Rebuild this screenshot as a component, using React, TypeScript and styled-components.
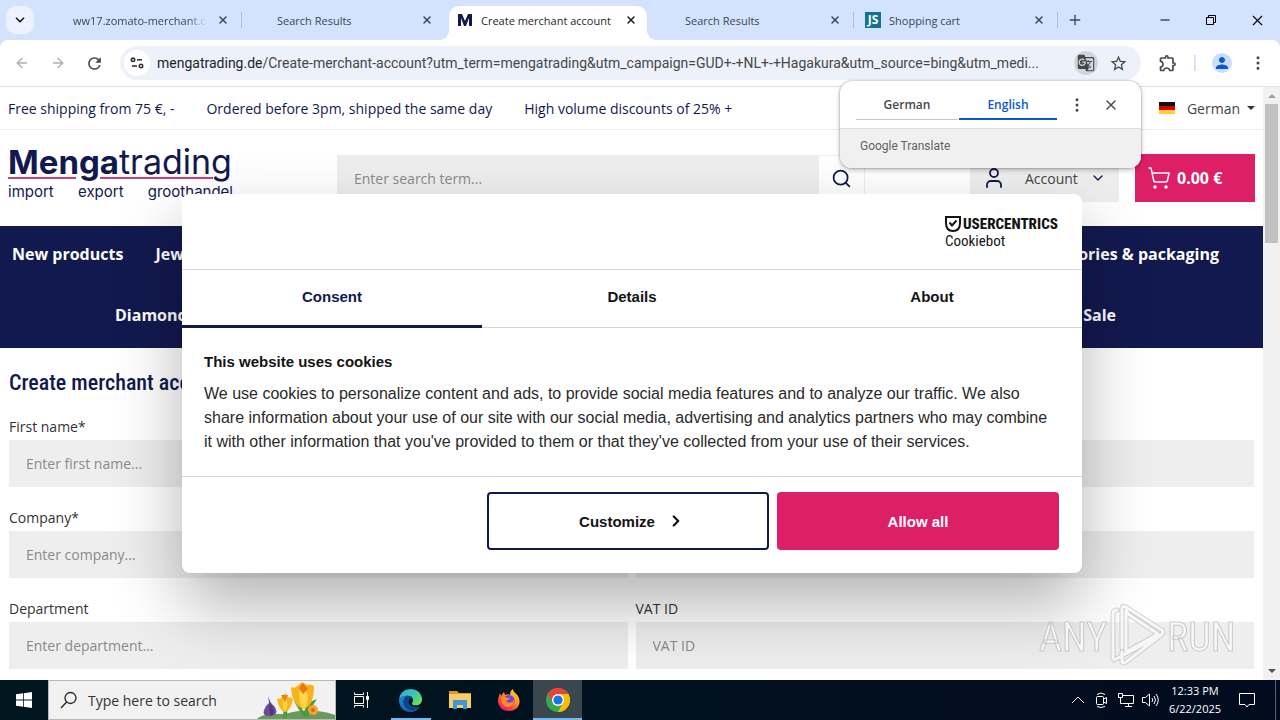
import styled, { createGlobalStyle } from "styled-components";
import { ArrowLeft, ArrowRight, ChevronDown, ChevronRight, EllipsisVertical, Minus, Plus, Search, ShoppingCart, User, X } from "lucide-react";
import { MdGTranslate, MdOutlineExtension, MdPerson, MdRefresh, MdStarBorder } from "react-icons/md";

const navy = "#12194f";
const pink = "#dc1f66";
const ui = `"Open Sans", "Noto Sans", sans-serif`;
const condensed = `"Roboto Condensed", "Liberation Sans Narrow", sans-serif`;

const GlobalStyle = createGlobalStyle`
  * { box-sizing: border-box; }
  body { margin: 0; font-family: ${ui}; font-size: 14px; color: #222; }
  button, input { font: inherit; color: inherit; margin: 0; }
  button { border: 0; background: none; padding: 0; cursor: pointer; }
  a { color: inherit; text-decoration: none; }
  svg { flex: none; }
`;

const Desktop = styled.div`
  display: flex;
  flex-direction: column;
  height: 100vh;
  overflow: hidden;
  position: relative;
  background: #d3e3fd;
`;

/* ---------- tab strip ---------- */

const TabStrip = styled.div`
  display: flex;
  height: 40px;
  flex: none;
  padding-left: 6px;
  color: #3c4654;
`;

const TabSearch = styled.button`
  display: grid;
  place-items: center;
  width: 28px;
  height: 28px;
  margin: 6px 4px 0 0;
  border-radius: 10px;
  background: #ecf2fe;
  color: #1f1f1f;
`;

const Tab = styled.div<{ $divided?: boolean }>`
  display: flex;
  align-items: center;
  flex: 0 1 204px;
  min-width: 0;
  height: 28px;
  margin-top: 6px;
  padding: 0 11px;
  background: ${(p) => (p.$divided ? "linear-gradient(#a8c0ea, #a8c0ea) right center / 1px 16px no-repeat" : "none")};
`;

const ActiveTab = styled(Tab)`
  position: relative;
  flex-basis: 198px;
  height: 34px;
  margin: 6px 3px 0;
  padding: 0 8px 6px;
  border-radius: 10px 10px 0 0;
  background: #fff;
  color: #1f1f1f;
  &::before, &::after {
    content: "";
    position: absolute;
    bottom: 0;
    width: 10px;
    height: 10px;
  }
  &::before { right: 100%; background: radial-gradient(circle at 0 0, transparent 10px, #fff 10px); }
  &::after { left: 100%; background: radial-gradient(circle at 100% 0, transparent 10px, #fff 10px); }
`;

const TabTitle = styled.span<{ $fade?: boolean }>`
  flex: 1;
  overflow: hidden;
  white-space: nowrap;
  font-size: 11px;
  margin-right: ${(p) => (p.$fade ? "8px" : "0")};
  mask-image: ${(p) => (p.$fade ? "linear-gradient(to right, #000 85%, transparent)" : "none")};
`;

const Favicon = styled.span`
  display: grid;
  flex: none;
  width: 16px;
  height: 16px;
  margin-right: 8px;
`;

const IconButton = styled.button<{ $size?: number; $tint?: string }>`
  display: grid;
  place-items: center;
  flex: none;
  width: ${(p) => p.$size ?? 28}px;
  height: ${(p) => p.$size ?? 28}px;
  border-radius: 50%;
  background: ${(p) => p.$tint ?? "transparent"};
`;

const NewTab = styled(IconButton)`
  margin: 6px auto 0 3px;
`;

const WindowControls = styled.div`
  display: flex;
  color: #000;
  button { display: grid; place-items: center; width: 46px; height: 40px; }
`;

/* ---------- address bar ---------- */

const Toolbar = styled.div`
  display: flex;
  align-items: center;
  height: 47px;
  flex: none;
  padding: 0 8px;
  background: #fff;
  border-bottom: 1px solid #dcdfe4;
  border-radius: 8px 8px 0 0;
  color: #474747;
`;

const NavigationButtons = styled.div`
  display: flex;
  align-items: center;
  gap: 8px;
  margin-right: 12px;
`;

const Omnibox = styled.div`
  display: flex;
  align-items: center;
  gap: 4px;
  flex: 1;
  min-width: 0;
  height: 34px;
  margin-right: 13px;
  padding: 0 7px 0 4px;
  border-radius: 17px;
  background: #edf1fa;
`;

const Address = styled.div`
  flex: 1;
  min-width: 0;
  margin-left: 3px;
  overflow: hidden;
  text-overflow: ellipsis;
  white-space: nowrap;
  font-family: Roboto, sans-serif;
  font-size: 14px;
  line-height: 20px;
  color: #474747;
  b { font-weight: 400; color: #1f1f1f; }
`;

const ToolbarDivider = styled.span`
  width: 2px;
  height: 16px;
  margin: 0 16px 0 12px;
  background: #d3e3fd;
`;

const ProfileButton = styled(IconButton)`
  margin-right: 12px;
  color: #0b57d0;
`;

/* ---------- page ---------- */

const Viewport = styled.div`
  position: relative;
  display: flex;
  flex: 1;
  min-height: 0;
  background: #fff;
`;

const Page = styled.div`
  flex: 1;
  min-width: 0;
  overflow: hidden;
`;

const ServiceBar = styled.div`
  display: flex;
  align-items: center;
  gap: 32px;
  height: 43px;
  padding: 0 8px;
  border-bottom: 1px solid #ececec;
  color: ${navy};
`;

const LanguageButton = styled.button`
  display: flex;
  align-items: center;
  gap: 12px;
  margin-left: auto;
  color: #444;
`;

const Caret = styled.span`
  border: 4px solid transparent;
  border-top-color: #333;
  border-bottom: 0;
  margin-left: -5px;
`;

const Header = styled.header`
  display: flex;
  align-items: flex-start;
  height: 96px;
  padding: 24px 8px 0;
`;

const Logo = styled.a`
  display: block;
  width: 225px;
  margin: -12px 104px 0 0;
  font-family: Inter, sans-serif;
  color: ${navy};
`;

const Wordmark = styled.div`
  font-size: 34px;
  line-height: 40px;
  white-space: nowrap;
  b { font-size: 33px; font-weight: 700; }
`;

const LogoRule = styled.div`
  display: flex;
  gap: 24px;
  margin-top: -5px;
  padding-right: 20px;
  i { height: 2px; background: #cf3f73; }
  i:first-child { width: 68px; }
  i:last-child { flex: 1; }
`;

const Tagline = styled.div`
  display: flex;
  justify-content: space-between;
  margin-top: 3px;
  font-size: 15px;
  line-height: 20px;
`;

const SearchForm = styled.form`
  display: flex;
  width: 528px;
  height: 48px;
  margin-top: 1px;
  margin-right: 105px;
  border: 1px solid #eee;
  input {
    flex: 1;
    border: 0;
    padding: 0 16px 2px;
    background: #eee;
  }
  input::placeholder { color: #8a8a8a; }
  button { width: 45px; padding-bottom: 2px; display: grid; place-items: center; color: ${navy}; }
`;

const AccountButton = styled.button`
  display: flex;
  align-items: center;
  width: 149px;
  height: 48px;
  padding: 0 12px 0 12px;
  background: #eee;
  color: #444;
  svg { color: ${navy}; }
  span { margin: 0 12px 0 19px; }
`;

const CartButton = styled.button`
  display: flex;
  align-items: center;
  gap: 6px;
  width: 120px;
  height: 48px;
  margin-left: auto;
  padding: 0 12px;
  background: ${pink};
  color: #fff;
  font-size: 16px;
  font-weight: 700;
`;

const Nav = styled.nav`
  background: ${navy};
  color: #fff;
  font-size: 16px;
  font-weight: 700;
`;

const NavRow = styled.div<{ $start: number; $end: number }>`
  display: flex;
  align-items: center;
  gap: 32px;
  height: 61px;
  padding: 0 ${(p) => p.$end}px 6px ${(p) => p.$start}px;
  a:last-child { margin-left: auto; }
`;

const Main = styled.main`
  padding: 20px 9px 0;
`;

const Title = styled.h1`
  margin: 0 0 18px;
  font-family: ${condensed};
  font-size: 22px;
  line-height: 30px;
  font-weight: 500;
  color: ${navy};
`;

const FormGrid = styled.form`
  display: grid;
  grid-template-columns: 1fr 1fr;
  align-items: end;
  gap: 20px 8px;
`;

const Field = styled.label`
  display: grid;
  gap: 2px;
  line-height: 22px;
  color: #333;
  input {
    width: 100%;
    height: 47px;
    border: 0;
    padding: 0 17px;
    background: #eee;
  }
  input::placeholder { color: #8a8a8a; }
`;

const Scrollbar = styled.div`
  display: flex;
  flex-direction: column;
  align-items: center;
  width: 17px;
  padding: 7px 0;
  background: #f1f1f1;
`;

const Arrow = styled.span<{ $down?: boolean }>`
  border: 4px solid transparent;
  ${(p) => (p.$down ? "border-bottom: 0; border-top-color: #505050; margin-top: auto;" : "border-top: 0; border-bottom-color: #a3a3a3;")}
`;

const Thumb = styled.span`
  width: 13px;
  height: 139px;
  margin-top: 6px;
  background: #c1c1c1;
`;

/* ---------- cookie dialog ---------- */

const DialogLayer = styled.div`
  position: absolute;
  inset: 0 16px 0 0;
  display: grid;
  place-items: center;
  overflow: hidden;
`;

const Dialog = styled.section`
  width: 900px;
  max-width: 92%;
  background: #fff;
  border-radius: 8px;
  box-shadow: 0 32px 68px rgba(0, 0, 0, 0.3);
  font-family: "Liberation Sans", sans-serif;
  color: #141414;
`;

const DialogHeader = styled.div`
  display: flex;
  justify-content: flex-end;
  height: 75px;
  padding: 20px 23px 0;
`;

const CookiebotLogo = styled.div`
  width: 114px;
  font-family: ${condensed};
  div { display: flex; align-items: center; gap: 2px; height: 20px; font-weight: 800; font-size: 15px; }
  span { display: block; font-size: 15px; line-height: 14px; }
`;

const DialogTabs = styled.div`
  display: grid;
  grid-template-columns: repeat(3, 1fr);
  height: 59px;
  border: 1px solid #d6d6d6;
  border-width: 1px 0;
`;

const DialogTab = styled.button<{ $active?: boolean }>`
  padding-bottom: 3px;
  margin-bottom: -1px;
  border-bottom: 3px solid ${(p) => (p.$active ? navy : "transparent")};
  color: ${(p) => (p.$active ? navy : "#141414")};
  font-weight: 700;
  font-size: 15px;
`;

const DialogBody = styled.div`
  padding: 22px 27px 22px 22px;
  font-size: 16px;
  line-height: 24px;
  h2 { margin: 0 0 8px; font-size: 15px; line-height: 24px; }
  p { margin: 0; color: #2a2a2a; }
`;

const DialogFooter = styled.div`
  display: flex;
  justify-content: flex-end;
  gap: 8px;
  padding: 15px 23px 23px;
  border-top: 1px solid #d6d6d6;
`;

const DialogAction = styled.button<{ $primary?: boolean }>`
  display: flex;
  align-items: center;
  justify-content: center;
  gap: 12px;
  width: 282px;
  height: 58px;
  padding-left: ${(p) => (p.$primary ? 0 : 8)}px;
  border: 2px solid ${(p) => (p.$primary ? pink : navy)};
  border-radius: 4px;
  background: ${(p) => (p.$primary ? pink : "#fff")};
  color: ${(p) => (p.$primary ? "#fff" : "#141414")};
  font-weight: 700;
  font-size: 15px;
`;

/* ---------- translate bubble ---------- */

const Bubble = styled.section`
  position: absolute;
  top: 81px;
  right: 139px;
  width: 301px;
  border-radius: 12px;
  overflow: hidden;
  background: #fff;
  box-shadow: 0 0 2px rgba(0, 0, 0, 0.4), 0 2px 5px rgba(0, 0, 0, 0.25);
`;

const BubbleTabs = styled.div`
  display: flex;
  align-items: center;
  height: 47px;
  padding: 0 16px;
  gap: 1px;
  color: #474747;
`;

const BubbleTab = styled.button<{ $active?: boolean }>`
  flex: 1 1 ${(p) => (p.$active ? "98px" : "102px")};
  height: 31px;
  font-size: 12px;
  font-weight: 600;
  color: ${(p) => (p.$active ? "#0b57d0" : "#474747")};
  box-shadow: inset 0 ${(p) => (p.$active ? "-2px #0b57d0" : "-1px #c7c7c7")};
`;

const BubbleFooter = styled.div`
  height: 40px;
  padding: 9px 20px;
  border-top: 1px solid #dedede;
  background: #f0f0f0;
  font-family: Roboto, sans-serif;
  font-size: 12px;
  line-height: 16px;
  color: #5f6368;
`;

/* ---------- watermark ---------- */

const Watermark = styled.div`
  position: absolute;
  right: 46px;
  bottom: 46px;
`;

/* ---------- taskbar ---------- */

const Taskbar = styled.footer`
  display: flex;
  align-items: stretch;
  height: 40px;
  flex: none;
  background: linear-gradient(to right, #011720, #020b1f);
  color: #fff;
`;

const TaskButton = styled.button<{ $open?: boolean; $active?: boolean; $wide?: boolean }>`
  display: grid;
  place-items: center;
  width: ${(p) => (p.$wide ? 50 : 49)}px;
  background:
    linear-gradient(#76b9ed, #76b9ed) center bottom / ${(p) => (p.$active ? "100%" : p.$open ? "40px" : "0")} 2px no-repeat,
    ${(p) => (p.$active ? "#3a474e" : "transparent")};
`;

const StartButton = styled(TaskButton)`
  width: 48px;
`;

const TaskSearch = styled.label`
  display: flex;
  align-items: center;
  width: 288px;
  padding-left: 11px;
  gap: 10px;
  border: 1px solid #b8b8b8;
  background: #f1f1f1;
  color: #222;
  input { flex: 1; min-width: 0; padding: 0; border: 0; background: none; font-size: 14px; }
  input::placeholder { color: #333; opacity: 1; }
`;

const Tray = styled.div`
  display: flex;
  align-items: center;
  gap: 8px;
  margin-left: auto;
  padding-right: 4px;
`;

const Clock = styled.div`
  width: 56px;
  margin-right: 7px;
  text-align: center;
  font-size: 11px;
  line-height: 18px;
  white-space: nowrap;
`;

const ShowDesktop = styled.span`
  align-self: stretch;
  width: 1px;
  margin-left: 11px;
  background: #56606b;
`;

const fields = [
  { label: "First name*", hint: "Enter first name..." },
  { name: "Last name" },
  { label: "Company*", hint: "Enter company..." },
  { name: "Street and number" },
  { label: "Department", hint: "Enter department..." },
  { label: "VAT ID", hint: "VAT ID" },
];

const MengaIcon = () => (
  <svg width="16" height="16" viewBox="0 0 16 16">
    <path d="M1 14V2h4l3 7 3-7h4v12h-3V6l-3 8H7L4 6v8z" fill={navy} />
  </svg>
);

const ShopIcon = () => (
  <svg width="16" height="16" viewBox="0 0 16 16">
    <path d="M0 0h16v16H0z" fill="#0e7490" />
    <text x="8" y="12" textAnchor="middle" fontFamily="Open Sans" fontSize="12" fontWeight="700" fill="#fff">JS</text>
  </svg>
);

const CloseTab = () => (
  <IconButton $size={16} aria-label="Close tab"><X size={12} strokeWidth={3} /></IconButton>
);

const WindowsLogo = () => (
  <svg width="16" height="16" viewBox="0 0 16 16" fill="#fff">
    <path d="M0 2.3 7 1.3V7.6H0zM7.8 1.2 16 0V7.6H7.8zM0 8.4H7V14.7L0 13.7zM7.8 8.4H16V16L7.8 14.8z" />
  </svg>
);

const MagnifierLeft = () => (
  <svg width="18" height="18" viewBox="0 0 18 18" fill="none" stroke="#222" strokeWidth="1.300">
    <circle cx="10.500" cy="7" r="5.500" /><path d="M6.600 11 1 17" />
  </svg>
);

const Crocus = () => (
  <svg width="78" height="38" viewBox="0 0 78 38">
    <path d="M0 38C10 30 22 35 32 32S60 28 78 34V38z" fill="#6a9a5b" />
    <path d="M26 37Q28 24 21 20Q32 24 30 37zM47 35Q47 22 60 18Q53 28 51 36zM47 36Q40 26 37 20Q46 25 48 36z" fill="#4a9b3c" />
    <path d="M11 15Q13 22 17 25Q23 33 14 35Q5 36 7 29Q9 24 12 22z" fill="#6b4c9a" />
    <path d="M13 22Q11 30 14 35Q20 31 13 22z" fill="#51357d" />
    <path d="M20 17Q24 19 25 16L28 12L31 16Q34 16 36 18Q34 30 28 31Q22 30 20 17z" fill="#f7b719" />
    <path d="M28 13Q23 24 28 31Q33 24 28 13z" fill="#ffd23f" />
    <path d="M24 14h7l-3 7z" fill="#e8811a" />
    <path d="M34 6Q38 8 40 5L45 1L50 4Q54 3 57 5Q57 25 47 28Q35 25 34 6z" fill="#f9b31a" />
    <path d="M46 3Q38 18 47 28Q55 18 46 3z" fill="#ffd84a" />
    <path d="M42 7l4-5 5 6-5 5z" fill="#e8761a" />
    <circle cx="56" cy="29" r="5" fill="#f5a62a" />
    <circle cx="56" cy="29" r="2" fill="#d9661b" />
  </svg>
);

const TaskView = () => (
  <svg width="16" height="16" viewBox="0 0 16 16" fill="none" stroke="#fff">
    <path d="M1.500 4.500h9v7h-9zM1.500 .5v2h9v-2M1.500 15.500v-2h9v2M14.500 0v16" />
    <path d="M13.500 4.500h2v3h-2z" fill="#fff" />
  </svg>
);

const EdgeLogo = () => (
  <svg width="25" height="25" viewBox="0 0 26 26">
    <defs>
      <linearGradient id="edgeTop" x1="0" y1="0" x2="1" y2="0.6">
        <stop offset="0" stopColor="#2aa8e0" />
        <stop offset="0.6" stopColor="#38c6b4" />
        <stop offset="1" stopColor="#6cdb5c" />
      </linearGradient>
      <linearGradient id="edgeLow" x1="0" y1="0" x2="1" y2="1">
        <stop offset="0" stopColor="#1b8ad8" />
        <stop offset="1" stopColor="#104f9e" />
      </linearGradient>
    </defs>
    <path d="M1 12C2 5 7 1 13 1c7 0 12 5 12 11 0 4-3 6-6 6-4 0-5-1-4-3 2-4-1-7-5-7-5 0-8 2-9 4z" fill="url(#edgeTop)" />
    <path d="M1 12c2-3 5-4 9-4-4 2-5 6-3 10 3 6 10 6 16 1-2 4-6 6-10 6C6 25 1 20 1 12z" fill="url(#edgeLow)" />
    <path d="M10 8c-5 2-5 7-2 11 3 5 10 4 15 0-4 1-9 1-11-2s0-6 2-6c-1-2-2-3-4-3z" fill="#0c438c" />
  </svg>
);

const FolderIcon = () => (
  <svg width="22" height="20" viewBox="0 0 22 20">
    <path d="M0 1h8l2 2h12v5H0z" fill="#d99a26" />
    <path d="M0 4h22v14H0z" fill="#f5cf66" />
    <path d="M4 10h14v9h-4v-4H8v4H4z" fill="#3f95d6" />
    <path d="M8 15h6v3H8z" fill="#f5cf66" />
  </svg>
);

const FirefoxLogo = () => (
  <svg width="24" height="24" viewBox="0 0 24 24">
    <defs>
      <linearGradient id="fox" x1="0.9" y1="0" x2="0.2" y2="1">
        <stop offset="0" stopColor="#ffe226" />
        <stop offset="0.4" stopColor="#ff9a1f" />
        <stop offset="0.75" stopColor="#ff3b47" />
        <stop offset="1" stopColor="#e31587" />
      </linearGradient>
    </defs>
    <path d="M3 5l1 3 3-4 1 3c2-1 4-1 5 0 0-3 1-5 3-6 0 3 3 4 5 7 4 7 0 15-9 15C5 23 1 18 1 13c0-3 1-5 2-8z" fill="url(#fox)" />
    <circle cx="12" cy="12.500" r="5.500" fill="#7542e5" />
    <path d="M5 9c2-1 4 0 5 1l3 0c-1 2-3 2-4 3 2 3 6 2 8-1 0 5-3 7-6 7-5 0-8-5-6-10z" fill="#ff8a20" />
  </svg>
);

const ChromeLogo = () => (
  <svg width="24" height="24" viewBox="0 0 24 24">
    <circle cx="12" cy="12" r="12" fill="#34a853" />
    <path d="M22.400 6A12 12 0 0 1 12 24L17 15 12 6z" fill="#fbbc04" />
    <path d="M1.600 6A12 12 0 0 1 22.400 6H12L7 15z" fill="#ea4335" />
    <circle cx="12" cy="12" r="6" fill="#fff" />
    <circle cx="12" cy="12" r="4.600" fill="#1a73e8" />
  </svg>
);

const GermanFlag = () => (
  <svg width="16" height="12" viewBox="0 0 16 12">
    <path d="M0 0h16v4H0z" fill="#111" />
    <path d="M0 4h16v4H0z" fill="#d00" />
    <path d="M0 8h16v4H0z" fill="#fc3" />
  </svg>
);

const markPath = "M75 56V12q0-4 4-4M84 46V7q0-4 4-2l34 22M84 60V50M76 58l46-24q6-4 0-7M122 34 88 60q-3 2-4 0M90 12l-2-4v42l32-18z";

const AnyRunMark = () => (
  <svg width="196" height="68" viewBox="0 0 196 68" opacity="0.85">
    <g fill="#fafafa" stroke="#c4c4c4" strokeWidth="1" fontFamily={condensed} fontSize="40" fontWeight="400">
      <text x="1" y="49">ANY</text>
      <text x="129" y="49">RUN</text>
    </g>
    <g fill="none" strokeLinecap="round" strokeLinejoin="round">
      <path d={markPath} stroke="#c8c8c8" strokeWidth="5" />
      <path d={markPath} stroke="#f8f8f8" strokeWidth="3" />
    </g>
  </svg>
);

export default function App() {
  return (
    <Desktop>
      <GlobalStyle />
      <TabStrip>
        <TabSearch aria-label="Search tabs"><ChevronDown size={14} strokeWidth={3} /></TabSearch>
        <Tab $divided><Favicon /><TabTitle $fade>ww17.zomato-merchant.c</TabTitle><CloseTab /></Tab>
        <Tab><Favicon /><TabTitle>Search Results</TabTitle><CloseTab /></Tab>
        <ActiveTab><Favicon><MengaIcon /></Favicon><TabTitle>Create merchant account</TabTitle><CloseTab /></ActiveTab>
        <Tab $divided><Favicon /><TabTitle>Search Results</TabTitle><CloseTab /></Tab>
        <Tab $divided><Favicon><ShopIcon /></Favicon><TabTitle>Shopping cart</TabTitle><CloseTab /></Tab>
        <NewTab aria-label="New tab"><Plus size={16} /></NewTab>
        <WindowControls>
          <button aria-label="Minimize"><Minus size={14} strokeWidth={2} /></button>
          <button aria-label="Restore">
            <svg width="10" height="10" viewBox="0 0 10 10" fill="none" stroke="#000"><path d="M.5 2.500h7v7h-7zM2.500 2V.5h7v7H8" /></svg>
          </button>
          <button aria-label="Close"><X size={17} strokeWidth={1.500} /></button>
        </WindowControls>
      </TabStrip>

      <Toolbar>
        <NavigationButtons>
          <IconButton aria-label="Back"><ArrowLeft size={16} color="#b0b0b0" /></IconButton>
          <IconButton aria-label="Forward"><ArrowRight size={16} color="#b0b0b0" /></IconButton>
          <IconButton aria-label="Reload"><MdRefresh size={19} /></IconButton>
        </NavigationButtons>
        <Omnibox>
          <IconButton $size={26} $tint="#fff" aria-label="Site information">
            <svg width="14" height="12" viewBox="0 0 14 12" fill="none" stroke="#333" strokeWidth="1.600">
              <circle cx="3" cy="2.800" r="1.700" /><path d="M7 2.800h5" /><circle cx="11" cy="9" r="1.700" /><path d="M2 9h5" />
            </svg>
          </IconButton>
          <Address><b>mengatrading.de</b>/Create-merchant-account?utm_term=mengatrading&amp;utm_campaign=GUD+-+NL+-+Hagakura&amp;utm_source=bing&amp;utm_medi...</Address>
          <IconButton $size={24} $tint="#d0d4dc" aria-label="Translate this page"><MdGTranslate size={18} /></IconButton>
          <IconButton $size={32} aria-label="Bookmark"><MdStarBorder size={19} /></IconButton>
        </Omnibox>
        <IconButton aria-label="Extensions"><MdOutlineExtension size={20} /></IconButton>
        <ToolbarDivider />
        <ProfileButton $size={20} $tint="#c9defb" aria-label="Profile"><MdPerson size={18} /></ProfileButton>
        <IconButton aria-label="Menu"><EllipsisVertical size={18} /></IconButton>
      </Toolbar>

      <Viewport>
        <Page>
          <ServiceBar>
            <span>Free shipping from 75 €, -</span>
            <span>Ordered before 3pm, shipped the same day</span>
            <span>High volume discounts of 25% +</span>
            <LanguageButton><GermanFlag />German <Caret /></LanguageButton>
          </ServiceBar>
          <Header>
            <Logo href="#">
              <Wordmark><b>Menga</b>trading</Wordmark>
              <LogoRule><i /><i /></LogoRule>
              <Tagline><span>import</span><span>export</span><span>groothandel</span></Tagline>
            </Logo>
            <SearchForm>
              <input aria-label="Search" placeholder="Enter search term..." />
              <button type="button" aria-label="Search"><Search size={21} /></button>
            </SearchForm>
            <AccountButton><User size={24} strokeWidth={1.800} /><span>Account</span><ChevronDown size={16} /></AccountButton>
            <CartButton><ShoppingCart size={24} strokeWidth={1.500} />0.00 €</CartButton>
          </Header>
          <Nav>
            <NavRow $start={12} $end={44}>
              <a href="#">New products</a><a href="#">Jewellery</a><a href="#">Accessories &amp; packaging</a>
            </NavRow>
            <NavRow $start={115} $end={147}>
              <a href="#">Diamonds</a><a href="#">Sale</a>
            </NavRow>
          </Nav>
          <Main>
            <Title>Create merchant account</Title>
            <FormGrid>
              {fields.map((field, i) => (
                <Field key={i}>{field.label}<input aria-label={field.name} placeholder={field.hint} /></Field>
              ))}
            </FormGrid>
          </Main>
        </Page>
        <Scrollbar><Arrow /><Thumb /><Arrow $down /></Scrollbar>

        <DialogLayer>
          <Dialog role="dialog" aria-label="Cookie consent">
            <DialogHeader>
              <CookiebotLogo>
                <div>
                  <svg width="16" height="16" viewBox="0 0 16 16" fill="none" stroke="#141414" strokeWidth="2"><path d="M1 1h14v6q0 8-7 8T1 7z" /><path d="M4.500 6.500 7 9.500l4.500-5" /></svg>
                  USERCENTRICS
                </div>
                <span>Cookiebot</span>
              </CookiebotLogo>
            </DialogHeader>
            <DialogTabs>
              <DialogTab $active>Consent</DialogTab>
              <DialogTab>Details</DialogTab>
              <DialogTab>About</DialogTab>
            </DialogTabs>
            <DialogBody>
              <h2>This website uses cookies</h2>
              <p>We use cookies to personalize content and ads, to provide social media features and to analyze our traffic. We also share information about your use of our site with our social media, advertising and analytics partners who may combine it with other information that you've provided to them or that they've collected from your use of their services.</p>
            </DialogBody>
            <DialogFooter>
              <DialogAction>Customize<ChevronRight size={18} strokeWidth={3} /></DialogAction>
              <DialogAction $primary>Allow all</DialogAction>
            </DialogFooter>
          </Dialog>
        </DialogLayer>
      </Viewport>

      <Taskbar>
        <StartButton aria-label="Start"><WindowsLogo /></StartButton>
        <TaskSearch>
          <MagnifierLeft />
          <input aria-label="Search Windows" placeholder="Type here to search" />
          <Crocus />
        </TaskSearch>
        <TaskButton $wide aria-label="Task view"><TaskView /></TaskButton>
        <TaskButton $open aria-label="Edge"><EdgeLogo /></TaskButton>
        <TaskButton aria-label="File Explorer"><FolderIcon /></TaskButton>
        <TaskButton aria-label="Firefox"><FirefoxLogo /></TaskButton>
        <TaskButton $open $active aria-label="Chrome"><ChromeLogo /></TaskButton>
        <Tray>
          <svg width="14" height="16" viewBox="0 0 14 16" fill="none" stroke="#fff"><path d="M1 11l6-6 6 6" /></svg>
          <svg width="16" height="16" viewBox="0 0 16 16" fill="none" stroke="#fff"><rect x="3.500" y="4.500" width="7" height="8" rx="1" /><path d="M10.500 7l3-1.500v6l-3-1.500M4 2.500q4-3 8 0M4 14.500q4 2 8 0" /></svg>
          <svg width="17" height="16" viewBox="0 0 17 16" fill="none" stroke="#fff"><path d="M5.500 3.500h11v8h-11M1.500 1.500h4v4h-4zM3.500 5.500v6h2M8 14.500h7M11.500 11.500v3" /></svg>
          <svg width="17" height="16" viewBox="0 0 17 16" fill="none" stroke="#fff"><path d="M.5 5.500h3l4-3.500v12l-4-3.500h-3zM10 6q1.500 2 0 4M12 4q3 4 0 8M14 2q4.500 6 0 12" /></svg>
          <Clock>12:33 PM<br />6/22/2025</Clock>
          <svg width="18" height="18" viewBox="0 0 18 18" fill="none" stroke="#fff"><path d="M1.500 2.500h15v11H11L9 16l-2-2.500H1.500z" /></svg>
          <ShowDesktop />
        </Tray>
      </Taskbar>

      <Bubble>
        <BubbleTabs>
          <BubbleTab>German</BubbleTab>
          <BubbleTab $active>English</BubbleTab>
          <IconButton $size={38} aria-label="Options"><EllipsisVertical size={18} /></IconButton>
          <IconButton aria-label="Close"><X size={16} /></IconButton>
        </BubbleTabs>
        <BubbleFooter>Google Translate</BubbleFooter>
      </Bubble>
      <Watermark><AnyRunMark /></Watermark>
    </Desktop>
  );
}
